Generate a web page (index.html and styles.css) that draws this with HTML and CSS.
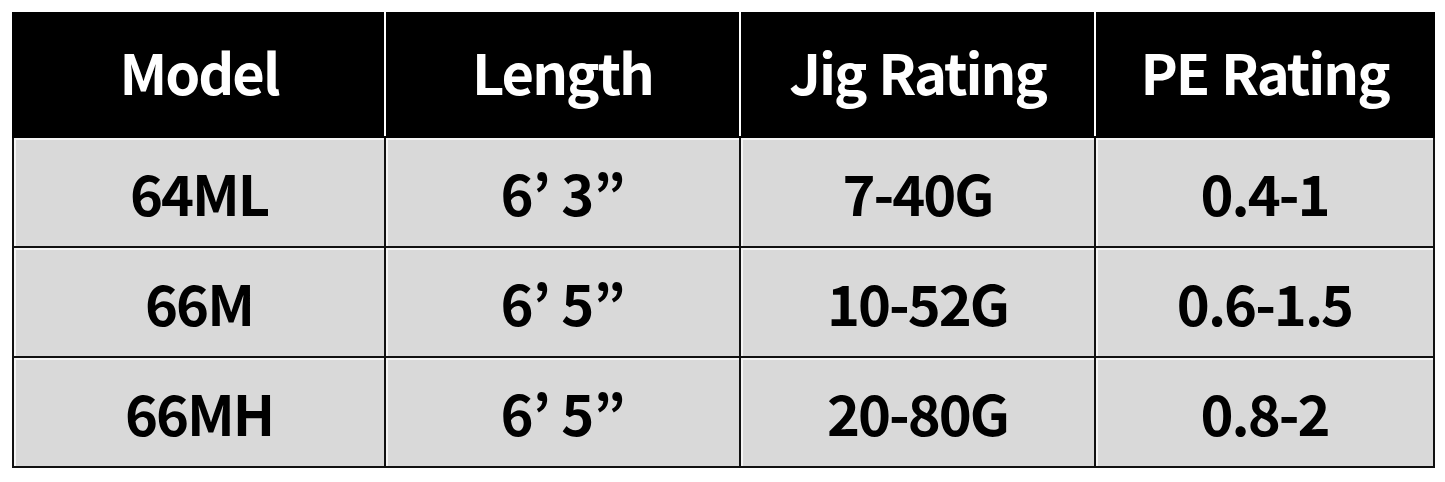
FILE: index.html
```html
<!DOCTYPE html>
<html lang="en">
<head>
<meta charset="utf-8">
<link rel="stylesheet" href="styles.css">
</head>
<body>
<div class="page">
<table class="spec">
  <colgroup>
    <col class="c1"><col class="c2"><col class="c3"><col class="c4">
  </colgroup>
  <thead>
    <tr><th>Model</th><th>Length</th><th>Jig Rating</th><th>PE Rating</th></tr>
  </thead>
  <tbody>
    <tr><td>64ML</td><td class="len">6’ 3”</td><td>7-40G</td><td>0.4-1</td></tr>
    <tr><td>66M</td><td class="len">6’ 5”</td><td>10-52G</td><td>0.6-1.5</td></tr>
    <tr><td>66MH</td><td class="len">6’ 5”</td><td>20-80G</td><td>0.8-2</td></tr>
  </tbody>
</table>
</div>
</body>
</html>
```
FILE: styles.css
```css
html, body { margin: 0; padding: 0; background: #fff; }
.page { padding: 12px 12px 0 12px; width: 1421px; }
.spec {
  width: 1421px;
  border-collapse: collapse;
  table-layout: fixed;
  font-family: "Noto Sans CJK KR", "Noto Sans", sans-serif;
  font-weight: 700;
  font-size: 56px;
  letter-spacing: -2px;
  line-height: 1;
}
.c1 { width: 372px; }
.c2 { width: 355px; }
.c3 { width: 355px; }
.c4 { width: 339px; }
.spec th, .spec td {
  text-align: center;
  vertical-align: middle;
  padding: 0;
}
.spec th {
  background: #000;
  color: #fff;
  height: 114px;
  padding-bottom: 8px;
  word-spacing: 2px;
  border: 2px solid #000;
  border-left: 2px solid #fff;
  border-right: 2px solid #fff;
}
.spec th:first-child { border-left-color: #000; }
.spec th:last-child { border-right-color: #000; }
.spec td {
  background: #d9d9d9;
  color: #000;
  height: 108px;
  border: 2px solid #111;
  box-shadow: inset 2px 2px 0 #f4f4f4;
}
.spec td.len { font-feature-settings: "palt" 1; letter-spacing: -1px; }
```
